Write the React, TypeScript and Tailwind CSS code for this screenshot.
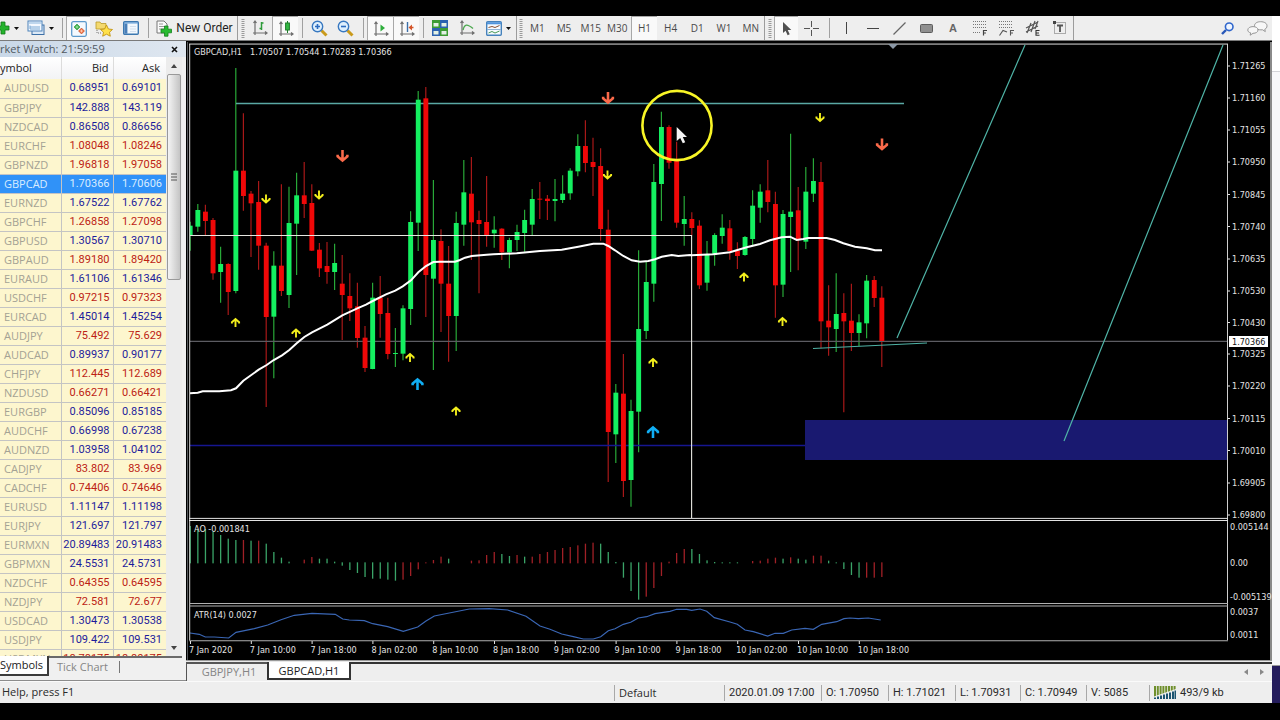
import type { ReactNode } from "react";

type Candle = [dir: "G" | "R", high: number, top: number, bottom: number, low: number];

const STEP = 7.6;
const FIRST_X = 190.2;
const barX = (i: number) => FIRST_X + i * STEP;
const priceY = (v: number) => 60 + v / 3;
const indicatorY = (v: number) => 515 + v / 3;

const candles: Candle[] = [
  ["G", 485, 497, 527, 572], ["G", 432, 450, 500, 515], ["R", 434, 455, 483, 526], ["R", 474, 480, 640, 659],
  ["G", 560, 612, 636, 728], ["R", 610, 612, 696, 765], ["G", 24, 332, 693, 700], ["R", 160, 332, 408, 452],
  ["R", 393, 401, 430, 591], ["R", 363, 426, 557, 629], ["R", 548, 557, 771, 1041], ["G", 574, 617, 770, 955],
  ["R", 373, 617, 693, 708], ["G", 380, 489, 705, 744], ["G", 338, 406, 491, 645], ["R", 306, 406, 432, 474],
  ["R", 373, 429, 572, 573], ["R", 549, 569, 625, 651], ["R", 546, 618, 636, 671], ["G", 551, 609, 636, 690],
  ["R", 585, 671, 705, 840], ["R", 640, 708, 745, 783], ["R", 668, 739, 834, 863], ["R", 798, 833, 924, 936],
  ["G", 668, 713, 927, 928], ["R", 648, 713, 762, 833], ["R", 713, 759, 882, 898], ["G", 804, 879, 882, 921],
  ["G", 736, 745, 881, 901], ["G", 454, 486, 747, 795], ["G", 93, 119, 488, 573], ["R", 81, 115, 645, 771],
  ["G", 360, 540, 656, 930], ["R", 508, 543, 671, 816], ["R", 558, 671, 768, 905], ["G", 455, 489, 768, 873],
  ["G", 300, 397, 494, 557], ["R", 291, 401, 487, 600], ["R", 452, 480, 492, 700], ["R", 348, 486, 526, 560],
  ["G", 469, 509, 520, 563], ["R", 505, 506, 577, 600], ["G", 533, 540, 577, 625], ["G", 494, 516, 540, 573],
  ["G", 449, 480, 519, 575], ["G", 387, 417, 494, 525], ["R", 366, 416, 419, 477], ["R", 405, 416, 423, 480],
  ["G", 357, 417, 423, 484], ["G", 346, 401, 420, 429], ["G", 325, 332, 400, 419], ["G", 223, 258, 334, 349],
  ["R", 181, 258, 309, 337], ["R", 233, 306, 321, 408], ["R", 265, 318, 507, 542], ["R", 449, 509, 1116, 1266],
  ["G", 972, 998, 1123, 1209], ["R", 882, 1001, 1263, 1311], ["G", 1019, 1053, 1260, 1340], ["G", 571, 807, 1055, 1177],
  ["G", 606, 666, 813, 837], ["G", 312, 366, 671, 725], ["G", 155, 201, 372, 483], ["R", 196, 201, 308, 326],
  ["R", 245, 298, 488, 503], ["G", 408, 477, 492, 557], ["R", 457, 477, 504, 526], ["R", 481, 497, 676, 687],
  ["G", 543, 583, 668, 692], ["G", 520, 525, 585, 617], ["G", 463, 503, 528, 551], ["R", 480, 505, 573, 599],
  ["R", 547, 572, 588, 627], ["G", 528, 531, 585, 587], ["G", 391, 437, 537, 557], ["G", 373, 395, 443, 488],
  ["R", 300, 391, 426, 457], ["R", 395, 432, 676, 773], ["G", 450, 462, 674, 711], ["G", 221, 455, 471, 636],
  ["R", 381, 451, 540, 631], ["G", 321, 395, 545, 567], ["G", 295, 363, 401, 426], ["R", 306, 366, 784, 865],
  ["R", 676, 782, 802, 887], ["G", 640, 762, 807, 876], ["R", 700, 759, 784, 1057], ["R", 671, 782, 819, 873],
  ["G", 763, 787, 819, 858], ["G", 645, 662, 790, 835], ["R", 648, 660, 714, 741], ["R", 679, 713, 843, 921],
];

/* Awesome Oscillator: colour and end of each bar, measured from the zero line at 144. */
const oscillator =
  "G33 G42 G42 G50 G60 G71 G75 R75 G77 R77 G86 G111 G128 G140 - R134 R126 G131 G131 G140 G152 G165 G174 G186 G191 G191 G194 G197 R194 R183 R163 R142 R135 R125 G131 - - R137 R136 R120 R111 G117 G123 R120 G125 R125 R117 R111 R105 R99 R96 R91 R86 R83 G86 G111 G141 G188 G228 G254 R245 R219 R183 R140 R114 R102 G102 G117 G136 G141 G142 G142 G142 - R138 R137 R131 R128 G131 R127 G131 G134 R122 R122 G137 G142 G162 G180 G188 R188 R188 R186".split(
    " ",
  );

type Pt = [number, number];
const maPoints: Pt[] = [
  ...([[12, 1000], [35, 998], [50, 994], [100, 994], [135, 991], [150, 985], [172, 962], [218, 929], [242, 915], [262, 901], [288, 886], [310, 870], [332, 850], [355, 831], [378, 817], [424, 794], [469, 766], [514, 745], [540, 734], [560, 723], [600, 703], [628, 692], [650, 679], [675, 661], [697, 637], [720, 618], [742, 606], [762, 605]] as Pt[]).map(([x, y]): Pt => [186 + x / 3, priceY(y)]),
  ...([[45, 605], [60, 600], [75, 593], [95, 588], [140, 584], [160, 583], [230, 580], [300, 573], [365, 569], [415, 560], [460, 551], [490, 551], [505, 558], [525, 571], [550, 588], [575, 601], [600, 605], [625, 603], [645, 598], [665, 590], [695, 585], [715, 588], [750, 585]] as Pt[]).map(([x, y]): Pt => [440 + x / 3, priceY(y)]),
  ...([[35, 586], [100, 583], [150, 577], [200, 562], [240, 552], [270, 541], [305, 532], [330, 530], [350, 540], [370, 537], [385, 534], [440, 534], [465, 540], [490, 550], [525, 560], [560, 565], [585, 571], [606, 571]] as Pt[]).map(([x, y]): Pt => [680 + x / 3, priceY(y)]),
];

const atrPoints: Pt[] = [
  ...([[12, 354], [40, 358], [58, 366], [85, 366], [128, 369], [150, 352], [205, 341], [245, 330], [285, 314], [325, 301], [378, 295], [448, 298], [470, 312], [490, 315], [535, 317], [560, 326], [605, 335], [652, 349], [695, 336], [720, 318], [745, 303], [790, 294], [850, 282], [910, 281], [965, 285], [1020, 304]] as Pt[]).map(([x, y]): Pt => [186 + x / 3, indicatorY(y)]),
  ...([[0, 333], [30, 343], [65, 357], [100, 365], [130, 372], [160, 372], [182, 365], [205, 347], [225, 341], [250, 328], [272, 322], [295, 309], [320, 305], [345, 296], [390, 289], [410, 283], [440, 283], [455, 286], [480, 282], [500, 289], [523, 308], [570, 321], [592, 328], [615, 345], [640, 350], [683, 363], [705, 355], [730, 355], [755, 345], [795, 340], [820, 343], [845, 328], [890, 320], [912, 311], [930, 309], [955, 311], [985, 309], [1022, 315]] as Pt[]).map(([x, y]): Pt => [540 + x / 3, indicatorY(y)]),
];

const toPath = (pts: Pt[]) => pts.map(([x, y]) => `${x.toFixed(1)},${y.toFixed(1)}`).join(" ");

const yellowUp: Pt[] = [[235.5, 322.5], [296, 333], [410, 357.5], [456, 411], [653, 362.5], [744, 277], [782.5, 321.5]];
const yellowDown: Pt[] = [[266, 199], [319, 195], [607.5, 175], [820, 117.5]];
const redDown: Pt[] = [[342.5, 156], [608, 98], [882, 144.5]];
const blueUp: Pt[] = [[417.5, 384], [653, 432]];

const priceLabels: [string, number][] = [
  ["1.71265", 65.5], ["1.71160", 97.5], ["1.71055", 129.5], ["1.70950", 161.5], ["1.70845", 194], ["1.70740", 226],
  ["1.70635", 258.5], ["1.70530", 290.5], ["1.70430", 322], ["1.70325", 353.5], ["1.70220", 385.5], ["1.70115", 418],
  ["1.70010", 450], ["1.69905", 482.5], ["1.69800", 514.5],
];
const timeLabels = [
  "7 Jan 2020", "7 Jan 10:00", "7 Jan 18:00", "8 Jan 02:00", "8 Jan 10:00", "8 Jan 18:00",
  "9 Jan 02:00", "9 Jan 10:00", "9 Jan 18:00", "10 Jan 02:00", "10 Jan 10:00", "10 Jan 18:00",
];

function Arrow({ at: [x, y], color, scale = 1, down = false }: { at: Pt; color: string; scale?: number; down?: boolean }) {
  return (
    <g transform={`translate(${x} ${y}) scale(${scale} ${down ? -scale : scale})`} fill="none" stroke={color} strokeWidth="1.9">
      <path d="M0 4.5V-3M-3.6 0.9V-0.3L0 -3.4L3.6 -0.3V0.9" />
    </g>
  );
}

function Chart() {
  return (
    <svg viewBox="186 41 1086 621" className="block h-auto w-full bg-black" role="img" aria-label="GBPCAD,H1 chart">
      <rect x="186" y="41" width="1086" height="621" fill="#000" />
      <rect x="187" y="42" width="1" height="619" fill="#55585c" />
      <rect x="189" y="43.3" width="1039" height="1.6" fill="#8a8a8a" />
      <rect x="1270" y="42" width="2" height="619" fill="#8a8a8a" />
      <rect x="186" y="660" width="1086" height="1" fill="#9a9a9a" />
      <rect x="186" y="661" width="1086" height="1" fill="#e8e8e8" />

      {candles.map(([dir, high, , , low], i) => (
        <line key={i} x1={barX(i)} x2={barX(i)} y1={priceY(high)} y2={priceY(low)} stroke={dir === "G" ? "#28a838" : "#a81818"} strokeWidth="1.2" />
      ))}
      <path d="M236 103.5H904" stroke="#5aa8a4" strokeWidth="1.4" />
      <path d="M190 341.3H1228" stroke="#5c5c62" strokeWidth="1.3" />
      <path d="M190 445.5H805" stroke="#161690" strokeWidth="1.3" />
      {candles.map(([dir, , top, bottom], i) => (
        <rect
          key={i}
          x={i === 0 ? 190 : barX(i) - 2.4}
          y={priceY(top)}
          width={i === 0 ? 2.6 : 4.9}
          height={(bottom - top) / 3}
          fill={dir === "G" ? "#14f060" : "#f00808"}
        />
      ))}
      <path d="M190 235.5H691.6V518" fill="none" stroke="#e6e6e0" strokeWidth="1.1" />
      <rect x="805" y="420" width="422" height="40" fill="#191970" />
      <path d="M897 338L1025 45M1064 441L1223 45M813 348.5L927 343" stroke="#4fb3a6" strokeWidth="1.2" />
      <polyline points={toPath(maPoints)} fill="none" stroke="#fff" strokeWidth="2" />
      <path d="M888 44h10l-5 5z" fill="#8b98a6" />

      {yellowUp.map((p, i) => <Arrow key={i} at={p} color="#f2ee1c" />)}
      {yellowDown.map((p, i) => <Arrow key={i} at={p} color="#f2ee1c" down />)}
      {redDown.map((p, i) => <Arrow key={i} at={p} color="#fb6a4a" scale={1.35} down />)}
      {blueUp.map((p, i) => <Arrow key={i} at={p} color="#10aef4" scale={1.35} />)}

      {oscillator.map((bar, i) => {
        if (bar === "-") return null;
        const end = Number(bar.slice(1));
        const y = Math.min(end, 142);
        return (
          <rect key={i} x={barX(i) - 0.6} y={indicatorY(y)} width="1.3" height={(Math.max(end, 145) - y) / 3} fill={bar[0] === "G" ? "#3aa468" : "#a02026"} />
        );
      })}
      <polyline points={toPath(atrPoints)} fill="none" stroke="#3a66b4" strokeWidth="1.2" />

      <path d="M189.7 44V640" stroke="#dcdcdc" strokeWidth="1" />
      <path d="M1227.5 44V640" stroke="#cfcfcf" strokeWidth="1" />
      <path d="M189 518.4H1228M189 520.5H1228" stroke="#e4e4e4" strokeWidth="1" />
      <path d="M189 603.5H1228M189 606H1228M189 640.7H1228" stroke="#b0b0b0" strokeWidth="1.1" />

      <g fill="#e4e4e4" className="font-['DejaVu_Sans_Condensed','Noto_Sans',sans-serif] text-[9px]">
        <text x="194" y="55">GBPCAD,H1</text>
        <text x="250" y="55">1.70507 1.70544 1.70283 1.70366</text>
        <text x="194" y="532">AO -0.001841</text>
        <text x="194" y="618">ATR(14) 0.0027</text>
        {priceLabels.map(([label, y]) => (
          <g key={label}>
            <rect x="1228" y={y} width="2" height="1" />
            <text x="1232" y={y + 3.5}>{label}</text>
          </g>
        ))}
        <text x="1230" y="530">0.005144</text>
        <text x="1230" y="566">0.00</text>
        <text x="1230" y="600">-0.005139</text>
        <text x="1230" y="615">0.0037</text>
        <text x="1230" y="638">0.0011</text>
        {timeLabels.map((label, i) => (
          <g key={label}>
            <rect x={190 + i * 60.8} y="641" width="1" height="3" />
            <text x={189 + i * 60.8} y="653">{label}</text>
          </g>
        ))}
        <rect x="1229" y="336" width="39" height="11" fill="#fff" />
        <text x="1232" y="345" fill="#111">1.70366</text>
      </g>

      <circle cx="677" cy="125.5" r="34.6" fill="none" stroke="#f8f526" strokeWidth="2.6" />
      <path d="M676.7 127V141L680.2 138L682.8 143.3L685.2 142.2L682.8 137H687Z" fill="#f4f4f4" />
    </svg>
  );
}

const quotes: [string, string, string, "up" | "down"][] = [
  ["AUDUSD", "0.68951", "0.69101", "up"], ["GBPJPY", "142.888", "143.119", "up"], ["NZDCAD", "0.86508", "0.86656", "up"],
  ["EURCHF", "1.08048", "1.08246", "down"], ["GBPNZD", "1.96818", "1.97058", "down"], ["GBPCAD", "1.70366", "1.70606", "up"],
  ["EURNZD", "1.67522", "1.67762", "up"], ["GBPCHF", "1.26858", "1.27098", "down"], ["GBPUSD", "1.30567", "1.30710", "up"],
  ["GBPAUD", "1.89180", "1.89420", "down"], ["EURAUD", "1.61106", "1.61346", "up"], ["USDCHF", "0.97215", "0.97323", "down"],
  ["EURCAD", "1.45014", "1.45254", "up"], ["AUDJPY", "75.492", "75.629", "down"], ["AUDCAD", "0.89937", "0.90177", "up"],
  ["CHFJPY", "112.445", "112.689", "down"], ["NZDUSD", "0.66271", "0.66421", "down"], ["EURGBP", "0.85096", "0.85185", "up"],
  ["AUDCHF", "0.66998", "0.67238", "up"], ["AUDNZD", "1.03958", "1.04102", "up"], ["CADJPY", "83.802", "83.969", "down"],
  ["CADCHF", "0.74406", "0.74646", "down"], ["EURUSD", "1.11147", "1.11198", "up"], ["EURJPY", "121.697", "121.797", "up"],
  ["EURMXN", "20.89483", "20.91483", "up"], ["GBPMXN", "24.5531", "24.5731", "up"], ["NZDCHF", "0.64355", "0.64595", "down"],
  ["NZDJPY", "72.581", "72.677", "down"], ["USDCAD", "1.30473", "1.30538", "up"], ["USDJPY", "109.422", "109.531", "up"],
  ["USDMXN", "18.78175", "18.80175", "down"],
];

function MarketWatch() {
  return (
    <aside className="flex w-[186px] shrink-0 flex-col border-b border-[#8c8c8c] bg-[#f0f0f0]">
      <div className="flex h-4 items-center justify-between bg-linear-to-r from-[#c9d8e8] to-[#dfe7f0] pr-1 text-[#505860]">
        <span className="text-[11px] leading-4">rket Watch: 21:59:59</span>
        <button aria-label="Close Market Watch" className="flex size-4 items-center justify-center">
          <svg width="7" height="7" viewBox="0 0 7 7"><path d="M1 1L6 6M6 1L1 6" stroke="#111" strokeWidth="1.6" /></svg>
        </button>
      </div>
      <div className="flex h-0 grow overflow-hidden pr-1">
        <div className="min-w-0 flex-1 overflow-hidden">
          <table className="w-full table-fixed border-collapse">
            <thead>
              <tr className="h-[22px] bg-linear-to-b from-white to-[#f2f3f5] text-[11px] text-[#222]">
                <th className="w-[61px] border-r border-[#dcdcdc] p-0 text-left font-normal">ymbol</th>
                <th className="w-[52px] border-r border-[#dcdcdc] p-0 pr-1 text-right font-normal">Bid</th>
                <th className="p-0 pr-1.5 text-right font-normal">Ask</th>
              </tr>
            </thead>
            <tbody>
              {quotes.map(([symbol, bid, ask, dir], i) => {
                const selected = i === 5;
                const price = selected ? "text-[#d8ecff]" : dir === "up" ? "text-[#1c1c9c]" : "text-[#bc2214]";
                return (
                  <tr key={symbol} className={`h-[19px] border-b border-[#c4c4c4] leading-[18px] ${selected ? "bg-[#3092f8]" : "bg-[#fdf6ce]"}`}>
                    <td className={`border-r border-[#c4c4c4] p-0 pl-1 text-[11px] ${selected ? "text-[#d8ecff]" : "text-[#a4a294]"}`}>{symbol}</td>
                    <td className={`border-r border-[#c4c4c4] p-0 pr-[3px] text-right font-[Roboto,sans-serif] text-[11px] ${price}`}>{bid}</td>
                    <td className={`p-0 pr-1 text-right font-[Roboto,sans-serif] text-[11px] ${price}`}>{ask}</td>
                  </tr>
                );
              })}
            </tbody>
          </table>
        </div>
        <div className="flex w-4 flex-col items-center bg-[#ececec]">
          <button aria-label="Scroll up" className="flex h-[17px] w-full items-center justify-center">
            <svg width="6" height="4"><path d="M0 4L3 0L6 4Z" fill="#444" /></svg>
          </button>
          <div className="flex h-[206px] w-[14px] items-center justify-center rounded-xs border border-[#999] bg-linear-to-r from-[#f4f4f4] to-[#c4c4c4]">
            <svg width="6" height="8"><path d="M0 1H6M0 4H6M0 7H6" stroke="#555" /></svg>
          </div>
          <div className="flex-1" />
          <button aria-label="Scroll down" className="flex h-[17px] w-full items-center justify-center">
            <svg width="6" height="4"><path d="M0 0L3 4L6 0Z" fill="#444" /></svg>
          </button>
        </div>
      </div>
      <div className="flex h-6 items-start pr-1 text-[11px]">
        <button className="h-5 w-[49px] border-r-2 border-b-2 border-[#3c3c3c] bg-white text-left leading-[18px] text-[#222]">Symbols</button>
        <div className="flex flex-1 items-center border-t-2 border-[#6a6a6a]">
          <button className="h-[18px] w-[70px] pl-2 text-left leading-4 text-[#858585]">Tick Chart</button>
          <span className="h-3 border-l border-[#777]" />
        </div>
      </div>
    </aside>
  );
}

function Tool({ label, className, active, children }: { label: string; className: string; active?: boolean; children: ReactNode }) {
  return (
    <button
      aria-label={label}
      aria-pressed={active}
      className={`flex h-6 items-center justify-center ${active ? "border-t border-l border-[#a8a8a8] bg-[#f9f9f9]" : ""} ${className}`}
    >
      {children}
    </button>
  );
}

const Sep = () => <span className="flex w-2 shrink-0 justify-center"><span className="h-5 border-l border-[#a0a0a0]" /></span>;
const Grip = ({ className }: { className: string }) => (
  <span className={`flex shrink-0 items-center justify-center ${className}`}>
    <svg width="4" height="19"><path d="M2 0V19" stroke="#9a9a9a" strokeWidth="3" strokeDasharray="1 1" /></svg>
  </span>
);
const Caret = () => <svg width="5" height="3"><path d="M0 0H5L2.5 3Z" fill="#111" /></svg>;
const Axes = ({ children }: { children: ReactNode }) => (
  <svg width="16" height="16" viewBox="0 0 16 16" fill="none">
    <path d="M3 1V15M1 13H15M1.5 3L3 1L4.5 3M13 11.5L15 13L13 14.5" stroke="#6e6e6e" strokeWidth="1.2" />
    {children}
  </svg>
);
const plusShape = "M5 0H9V4H13V8H9V12H5V8H1V4H5Z";

function Toolbar() {
  return (
    <div className="flex h-[25px] items-center border-b border-[#7a7a7a] bg-[#eeeeee]">
      <div className="flex h-full items-center border-r border-[#9c9c9c]">
        <button aria-label="New chart" className="flex h-6 w-[22px] items-center gap-1">
          <svg width="10" height="16" viewBox="4 0 10 16"><path d={plusShape} transform="translate(0 2)" fill="#24b32c" stroke="#117a18" strokeWidth="0.8" /></svg>
          <Caret />
        </button>
        <button aria-label="Profiles" className="flex h-6 w-9 items-center justify-center gap-1">
          <svg width="18" height="16" viewBox="0 0 18 16" fill="none">
            <rect x="5" y="5" width="12" height="9.5" fill="#dce9f6" stroke="#3c6fa6" />
            <rect x="1" y="1" width="14" height="10" fill="#f4f9ff" stroke="#4c82ba" />
            <path d="M1.5 3H14.5" stroke="#9cc0e2" strokeWidth="1.2" />
            <path d="M3 5.5V9M3 7H13M3 9H13" stroke="#7aa9d4" />
          </svg>
          <Caret />
        </button>
        <Sep />
        <Tool label="Market Watch" active className="w-6">
          <svg width="16" height="16" viewBox="0 0 16 16">
            <rect x="0.7" y="0.7" width="14.6" height="14.6" rx="1.5" fill="#f4f9fe" stroke="#5c9acc" strokeWidth="1.3" />
            <path d="M6 3L9 6L6 9L3 6Z" fill="#2fae3b" stroke="#18802a" strokeWidth="0.5" />
            <path d="M6 4.5V7.5M4.5 6H7.5" stroke="#c8f0cc" strokeWidth="0.7" />
            <path d="M10.5 7L13.5 10L10.5 13L7.5 10Z" fill="#ee6a3a" stroke="#b8401c" strokeWidth="0.5" />
            <path d="M10.5 8.5V11.5M9 10H12" stroke="#ffe0d0" strokeWidth="0.7" />
          </svg>
        </Tool>
        <Tool label="Data Window" className="w-7">
          <svg width="18" height="17" viewBox="0 0 18 17">
            <path d="M1 2H5L6 3.5H11V9H1Z" fill="#f4d96e" stroke="#b99a2a" strokeWidth="0.8" />
            <path d="M2 10V13H6" fill="none" stroke="#777" strokeDasharray="1 1" />
            <path d="M11.5 5L13.4 9L17.5 9.5L14.5 12.2L15.3 16.2L11.5 14.2L7.7 16.2L8.5 12.2L5.5 9.5L9.6 9Z" fill="#ffe14a" stroke="#c29414" strokeWidth="0.9" />
          </svg>
        </Tool>
        <Tool label="Navigator" className="w-[26px]">
          <svg width="16" height="14" viewBox="0 0 16 14">
            <rect x="0.7" y="0.7" width="14.6" height="12.6" rx="1" fill="#f2f8fd" stroke="#3c78b0" strokeWidth="1.4" />
            <path d="M1 2H15" stroke="#5b9ad8" strokeWidth="1" />
            <rect x="1.4" y="2.6" width="3" height="10" fill="#4a7fb8" />
            <path d="M7 5.5H13M7 8H13M7 10.5H13" stroke="#d3e0ee" />
          </svg>
        </Tool>
        <Sep />
        <button className="flex h-6 w-[85px] items-center justify-center gap-1 text-[12px] text-[#1e1e1e]">
          <svg width="16" height="17" viewBox="0 0 16 17" className="shrink-0">
            <path d="M1 1H8L11 4V13H1Z" fill="#fbfbfb" stroke="#777" />
            <path d="M3 4H7M3 6.5H9M3 9H8" stroke="#999" />
            <path d="M8.5 6H12V9.2H15.5V12.8H12V16.2H8.5V12.8H5V9.2H8.5Z" fill="#28bb30" stroke="#12801a" strokeWidth="0.8" />
          </svg>
          <span className="whitespace-nowrap font-[Roboto,sans-serif] text-[12px]">New Order</span>
        </button>
      </div>

      <div className="flex h-full items-center border-r border-[#9c9c9c]">
        <Grip className="w-[9px]" />
        <Tool label="Bar chart" className="w-[25px]"><Axes><path d="M9.5 2V10M7.5 8.5H9.5M9.5 3H11.5" stroke="#2c9a38" strokeWidth="1.5" /></Axes></Tool>
        <Tool label="Candlesticks" active className="w-[26px]"><Axes><path d="M9.5 0V12" stroke="#1c7c28" /><rect x="7.6" y="2" width="3.8" height="7" fill="#34b844" stroke="#1c7c28" /></Axes></Tool>
        <Sep />
        <Tool label="Zoom in" className="w-[26px]">
          <svg width="17" height="17" viewBox="0 0 17 17" fill="none"><path d="M10.5 10.5L15.5 15.5" stroke="#c99a1c" strokeWidth="3" /><circle cx="6.5" cy="6.5" r="5.2" fill="#dff0fd" stroke="#3878c0" strokeWidth="1.4" /><path d="M4 6.5H9M6.5 4V9" stroke="#2c6cc0" strokeWidth="1.6" /></svg>
        </Tool>
        <Tool label="Zoom out" className="w-[27px]">
          <svg width="17" height="17" viewBox="0 0 17 17" fill="none"><path d="M10.5 10.5L15.5 15.5" stroke="#c99a1c" strokeWidth="3" /><circle cx="6.5" cy="6.5" r="5.2" fill="#dff0fd" stroke="#3878c0" strokeWidth="1.4" /><path d="M4 6.5H9" stroke="#2c6cc0" strokeWidth="1.6" /></svg>
        </Tool>
        <Sep />
        <Tool label="Auto scroll" active className="w-[26px]"><Axes><path d="M7.5 3.5V10.5L12 7Z" fill="#2eae3c" /></Axes></Tool>
        <Tool label="Chart shift" active className="w-[26px]"><Axes><path d="M8.5 1V11" stroke="#3a6ea8" strokeWidth="1.4" /><path d="M9.5 6.5L13 3.5V9.5Z" fill="#d4562a" /><path d="M11 6.5H14.5" stroke="#d4562a" strokeWidth="1.5" /></Axes></Tool>
        <Sep />
        <Tool label="Tile windows" className="w-[26px]">
          <svg width="16" height="16" viewBox="0 0 16 16">
            <rect width="8" height="8" fill="#3c9c34" /><rect x="8" width="8" height="8" fill="#2b62b0" /><rect y="8" width="8" height="8" fill="#2b62b0" /><rect x="8" y="8" width="8" height="8" fill="#3c9c34" />
            <path d="M1.5 3H6.5V6.5H1.5ZM9.5 3H14.5V6.5H9.5ZM1.5 11H6.5V14.5H1.5ZM9.5 11H14.5V14.5H9.5Z" fill="#e2f0e4" />
          </svg>
        </Tool>
        <Tool label="Indicators" className="w-[27px]"><Axes><path d="M4 10C5.5 4 8 3.5 14 8.5" stroke="#4ba84e" strokeWidth="1.4" /></Axes></Tool>
        <button aria-label="Templates" className="flex h-6 w-9 items-center justify-center gap-1">
          <svg width="16" height="15" viewBox="0 0 16 15" fill="none">
            <rect x="0.7" y="0.7" width="14.6" height="13.6" rx="1" fill="#f7fbff" stroke="#4682bc" strokeWidth="1.4" />
            <path d="M1 2.3H15" stroke="#4f94dc" strokeWidth="2" /><path d="M1 8.5H15" stroke="#90b4d6" />
            <path d="M2.5 6.5L6 5.5L9 6.5L13.5 4.5" stroke="#8a5030" /><path d="M2.5 12L6 10.5L9 12L13.5 10" stroke="#4a9a56" />
          </svg>
          <Caret />
        </button>
      </div>

      <div className="flex h-full items-center border-r border-[#9c9c9c]">
        <Grip className="w-[7px]" />
        <div className="grid w-60 grid-cols-9">
          {["M1", "M5", "M15", "M30", "H1", "H4", "D1", "W1", "MN"].map((tf) => (
            <button key={tf} aria-pressed={tf === "H1"} className={`h-6 text-center text-[10px] text-[#4a4a4a] ${tf === "H1" ? "border-t border-l border-[#a8a8a8] bg-[#f9f9f9]" : ""}`}>
              {tf}
            </button>
          ))}
        </div>
      </div>

      <div className="flex h-full items-center border-r border-[#9c9c9c]">
        <Grip className="w-[9px]" />
        <Tool label="Cursor" active className="w-6"><svg width="10" height="14" viewBox="0 0 10 14"><path d="M1 0V11L3.6 8.7L5.6 13.2L7.7 12.2L5.7 8H9.3Z" fill="#505050" /></svg></Tool>
        <Tool label="Crosshair" className="w-[27px]"><svg width="15" height="15"><path d="M7.5 0V6M7.5 9V15M0 7.5H6M9 7.5H15" stroke="#555" /></svg></Tool>
        <Sep />
        <div className="grid w-60 grid-cols-9">
          <Tool label="Vertical line" className="w-full"><svg width="3" height="12"><path d="M1.5 0V12" stroke="#444" /></svg></Tool>
          <Tool label="Horizontal line" className="w-full"><svg width="12" height="3"><path d="M0 1.5H12" stroke="#444" /></svg></Tool>
          <Tool label="Trend line" className="w-full"><svg width="13" height="13"><path d="M0.5 12.5L12.5 0.5" stroke="#666" strokeWidth="1.2" /></svg></Tool>
          <Tool label="Rectangle" className="w-full"><svg width="13" height="9"><rect x="0.5" y="0.5" width="12" height="8" rx="1" fill="#8f8f8f" stroke="#5c5c5c" /></svg></Tool>
          <Tool label="Text" className="w-full"><span className="font-['Liberation_Sans',sans-serif] text-[11px] font-bold text-[#666]">A</span></Tool>
          <Tool label="Fibonacci retracement" className="w-full">
            <svg width="14" height="16" viewBox="0 0 14 16" fill="none"><path d="M0 1.5H13M0 4.5H13M0 7.5H13M0 12.5H8" stroke="#777" strokeDasharray="1 1" /><path d="M10.5 15.5V10.5H14M10.5 13H13" stroke="#444" strokeWidth="1.2" /></svg>
          </Tool>
          <Tool label="Fibonacci fan" className="w-full">
            <svg width="15" height="16" viewBox="0 0 15 16" fill="none"><path d="M0 1.5H14M0 4.5H14M0 7.5H14" stroke="#777" strokeDasharray="1 1" /><path d="M0.5 15.5L4 10.5L8 12M11.5 15.5V10.5H15M11.5 13H14" stroke="#555" strokeWidth="1.1" /></svg>
          </Tool>
          <Tool label="Equidistant channel" className="w-full">
            <svg width="15" height="16" viewBox="0 0 15 16" fill="none"><path d="M1 8L13 2M1 12L13 6M2 13L6 3M6 12L10 1M10 9L13 1" stroke="#555" strokeWidth="1.2" /><path d="M14.5 10.5H11V15.3H14.5M11 13H14" stroke="#333" strokeWidth="1.1" /></svg>
          </Tool>
          <Tool label="Text label" className="w-full">
            <svg width="13" height="14" viewBox="0 0 13 14" fill="none"><rect x="1.5" y="1.5" width="11" height="11" stroke="#666" strokeDasharray="1 1" /><path d="M4 4.5H10M7 4.5V11" stroke="#555" strokeWidth="1.8" /><rect width="3" height="3" fill="#444" /></svg>
          </Tool>
        </div>
      </div>
      <div className="flex h-full flex-1 items-center justify-end">
        <Tool label="Search" className="w-[30px]">
          <svg width="13" height="13" viewBox="0 0 13 13" fill="none"><path d="M5 8L1 12" stroke="#2858b8" strokeWidth="2.4" /><circle cx="8.2" cy="4.8" r="3.8" fill="#eef5ff" stroke="#2f66cc" strokeWidth="1.6" /></svg>
        </Tool>
        <Tool label="Chat" className="w-[30px]">
          <svg width="21" height="15" viewBox="0 0 21 15" fill="#f7f7f7" stroke="#979797">
            <path d="M13.5 0.7C17.5 0.7 20 2.4 20 4.8C20 6.5 19.2 7.6 17.8 8.2L18.3 10.6L15.6 8.8C11 9.2 7.5 7.6 7.5 4.8C7.5 2.3 10 0.7 13.5 0.7Z" />
            <path d="M6 5.6C9 5.6 11 7 11 9C11 11 9 12.3 6 12.3L3.2 14.2L3.6 11.8C1.6 11.3 0.8 10.4 0.8 9C0.8 7 3 5.6 6 5.6Z" />
          </svg>
        </Tool>
      </div>
    </div>
  );
}

function StatusBar() {
  const cell = "h-4 border-l border-[#a8a8a8] pl-1 leading-4 whitespace-nowrap";
  return (
    <footer className="flex h-[22px] items-center border-t border-[#fafafa] bg-[#eeeeee] text-[11px] text-[#2a2a2a]">
      <span className="min-w-0 flex-1 pl-0.5">Help, press F1</span>
      <span className={`w-[110px] ${cell}`}>Default</span>
      <span className={`w-[97px] font-[Roboto,sans-serif] ${cell}`}>2020.01.09 17:00</span>
      <span className={`w-[67px] font-[Roboto,sans-serif] ${cell}`}>O: 1.70950</span>
      <span className={`w-[67px] font-[Roboto,sans-serif] ${cell}`}>H: 1.71021</span>
      <span className={`w-[65px] font-[Roboto,sans-serif] ${cell}`}>L: 1.70931</span>
      <span className={`w-[66px] font-[Roboto,sans-serif] ${cell}`}>C: 1.70949</span>
      <span className={`w-[63px] font-[Roboto,sans-serif] ${cell}`}>V: 5085</span>
      <span className={`flex w-[123px] items-center gap-1 font-[Roboto,sans-serif] ${cell}`}>
        <svg width="22" height="13" viewBox="0 0 22 13" fill="none">
          <path d="M0 6H22" stroke="#6f8f2c" strokeWidth="12" strokeDasharray="2 0.8" />
          <path d="M0 13V10.5L22 3V13Z" fill="#eee" />
          <path d="M1 13V11.5M4 13V10.5M7 13V9.5M10 13V8.5M13 13V7.5M16 13V6.5M19 13V5.5M21.5 13V4.5" stroke="#1c5470" strokeWidth="2" />
        </svg>
        493/9 kb
      </span>
    </footer>
  );
}

function ChartTabs() {
  return (
    <div className="flex h-[19px] items-start border-l border-[#555] bg-[#eeeeee] text-[11px]">
      <button className="h-[18px] w-20 border-t-2 border-[#555] pl-1 text-center leading-4 text-[#858585]">GBPJPY,H1</button>
      <button className="h-[18px] w-[84px] border-x-2 border-b-2 border-[#333] bg-white text-center leading-[18px] text-[#1c1c1c]">GBPCAD,H1</button>
      <div className="flex h-[18px] flex-1 items-center justify-end gap-3 border-t-2 border-[#333] pr-2">
        <button aria-label="Scroll tabs left" className="flex h-3 items-center"><svg width="4" height="6"><path d="M4 0V6L0 3Z" fill="#888" /></svg></button>
        <button aria-label="Scroll tabs right" className="flex h-3 items-center"><svg width="4" height="6"><path d="M0 0V6L4 3Z" fill="#888" /></svg></button>
      </div>
    </div>
  );
}

export default function App() {
  return (
    <div className="min-h-screen bg-black py-4 font-['Open_Sans','Noto_Sans',sans-serif]">
      <div className="flex">
        <div className="min-w-0 flex-1">
          <Toolbar />
          <div className="flex">
            <MarketWatch />
            <main className="min-w-0 flex-1">
              <Chart />
              <ChartTabs />
            </main>
          </div>
          <StatusBar />
        </div>
        <div className="flex w-2 shrink-0 flex-col">
          <div className="h-14 border-b border-[#d4d4d8] bg-white" />
          <div className="flex-1 bg-[#f8f8fa]" />
          <div className="h-[38px] border-t border-[#999] bg-[#241c5c]" />
        </div>
      </div>
    </div>
  );
}
